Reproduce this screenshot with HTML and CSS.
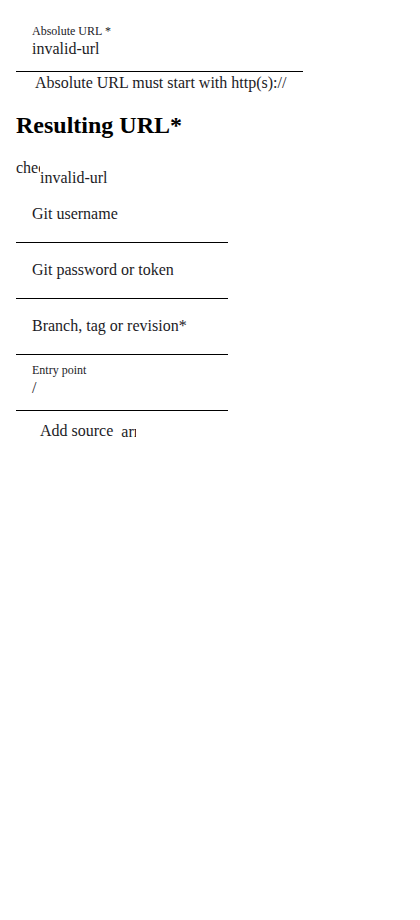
FILE: index.html
```html
<!DOCTYPE html>
<html lang="en">
<head>
<meta charset="utf-8">
<title>Add source</title>
<link rel="stylesheet" href="styles.css">
</head>
<body>
<main class="page">
  <div class="field field-wide">
    <span class="field-label-small">Absolute URL *</span>
    <span class="field-value">invalid-url</span>
  </div>
  <div class="helper">Absolute URL must start with http(s)://</div>

  <h2 class="title">Resulting URL*</h2>
  <div class="result"><span class="icon icon-check">check</span>invalid-url</div>

  <div class="field field-empty">
    <span class="field-label">Git username</span>
  </div>
  <div class="field field-empty">
    <span class="field-label">Git password or token</span>
  </div>
  <div class="field field-empty">
    <span class="field-label">Branch, tag or revision*</span>
  </div>
  <div class="field">
    <span class="field-label-small">Entry point</span>
    <span class="field-value">/</span>
  </div>

  <button class="btn" type="button"><span class="btn-text">Add source</span><span class="icon icon-arrow">arrow_forward</span></button>
</main>
</body>
</html>
```

FILE: styles.css
```css
html, body {
  margin: 0;
  padding: 0;
  background: #ffffff;
}

body {
  font-family: "Liberation Serif", "Times New Roman", serif;
  font-size: 16px;
  color: #1c1b1f;
}

.page {
  padding: 16px;
}

.field {
  box-sizing: border-box;
  width: 212px;
  height: 56px;
  border-bottom: 1px solid #000000;
  padding: 8px 16px 0;
  display: flex;
  flex-direction: column;
}

.field-wide {
  width: 287px;
}

.field-label-small {
  font-size: 12px;
  line-height: 15px;
  color: #1c1b1f;
}

.field-value {
  font-size: 16px;
  line-height: 18px;
  margin-top: 1px;
}

.field-empty {
  padding: 0 16px;
  justify-content: center;
}

.field-label {
  font-size: 16px;
  line-height: normal;
  padding-bottom: 1px;
}

.helper {
  padding: 2px 0 0 19px;
  font-size: 16px;
  line-height: normal;
}

.title {
  font-size: 24px;
  font-weight: bold;
  margin: 20px 0 20px;
  line-height: normal;
  color: #000000;
}

.result {
  font-size: 16px;
  line-height: normal;
}

.icon {
  display: inline-block;
  overflow: hidden;
  white-space: nowrap;
  font-size: 16px;
}

.icon-check {
  width: 23.6px;
  height: 24px;
  margin-right: 0.4px;
  line-height: 17px;
}

.btn {
  display: inline-flex;
  align-items: center;
  height: 40px;
  margin: 0;
  padding: 0 24px;
  border: 0;
  background: transparent;
  font-family: inherit;
  font-size: 16px;
  color: #1c1b1f;
  gap: 8px;
}

.btn-text {
  line-height: normal;
}

.icon-arrow {
  width: 15px;
  height: 18px;
  line-height: 20px;
}
```
